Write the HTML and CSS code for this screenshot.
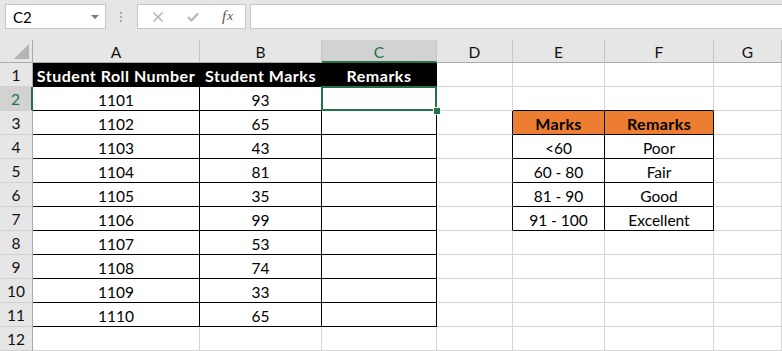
FILE: index.html
```html
<!DOCTYPE html>
<html>
<head>
    <title>Student Remarks</title>
    <meta charset="utf-8">
    <link rel="stylesheet" href="styles.css">
</head>
<body>
<div class="toolbar">
    <div class="namebox">
        <span>C2</span>
        <span class="caret"></span>
    </div>
    <div class="grip">
        <svg width="3" height="11" viewBox="0 0 3 11"><rect x="0" y="0" width="2" height="2" fill="#a9a9a9"/><rect x="0" y="4" width="2" height="2" fill="#a9a9a9"/><rect x="0" y="8" width="2" height="2" fill="#a9a9a9"/></svg>
    </div>
    <div class="fnbox">
        <span class="ico">
            <svg width="10" height="10" viewBox="0 0 10 10"><path d="M0.5 0.5 L9.5 9.5 M9.5 0.5 L0.5 9.5" stroke="#acacac" stroke-width="1.3" fill="none"/></svg>
        </span>
        <span class="ico">
            <svg width="12" height="10" viewBox="0 0 12 10"><path d="M1 5 L4.5 8.5 L11 1.5" stroke="#b4b4b4" stroke-width="2" fill="none"/></svg>
        </span>
        <span class="ico fx">f<i>x</i></span>
    </div>
    <div class="formula"></div>
</div>

<div class="sheet">
    <div class="corner"><span class="tri"></span></div>
    <div class="col">A</div>
    <div class="col">B</div>
    <div class="col sel">C</div>
    <div class="col">D</div>
    <div class="col">E</div>
    <div class="col">F</div>
    <div class="col">G</div>

    <div class="row">1</div>
    <div class="cell t dark">Student Roll Number</div>
    <div class="cell t dark">Student Marks</div>
    <div class="cell t dark">Remarks</div>
    <div class="cell"></div>
    <div class="cell"></div>
    <div class="cell"></div>
    <div class="cell"></div>

    <div class="row sel">2</div>
    <div class="cell t">1101</div>
    <div class="cell t">93</div>
    <div class="cell t active"></div>
    <div class="cell"></div>
    <div class="cell tb"></div>
    <div class="cell tb"></div>
    <div class="cell"></div>

    <div class="row">3</div>
    <div class="cell t">1102</div>
    <div class="cell t">65</div>
    <div class="cell t"></div>
    <div class="cell tr"></div>
    <div class="cell t orange">Marks</div>
    <div class="cell t orange">Remarks</div>
    <div class="cell"></div>

    <div class="row">4</div>
    <div class="cell t">1103</div>
    <div class="cell t">43</div>
    <div class="cell t"></div>
    <div class="cell tr"></div>
    <div class="cell t">&lt;60</div>
    <div class="cell t">Poor</div>
    <div class="cell"></div>

    <div class="row">5</div>
    <div class="cell t">1104</div>
    <div class="cell t">81</div>
    <div class="cell t"></div>
    <div class="cell tr"></div>
    <div class="cell t">60 - 80</div>
    <div class="cell t">Fair</div>
    <div class="cell"></div>

    <div class="row">6</div>
    <div class="cell t">1105</div>
    <div class="cell t">35</div>
    <div class="cell t"></div>
    <div class="cell tr"></div>
    <div class="cell t">81 - 90</div>
    <div class="cell t">Good</div>
    <div class="cell"></div>

    <div class="row">7</div>
    <div class="cell t">1106</div>
    <div class="cell t">99</div>
    <div class="cell t"></div>
    <div class="cell tr"></div>
    <div class="cell t">91 - 100</div>
    <div class="cell t">Excellent</div>
    <div class="cell"></div>

    <div class="row">8</div>
    <div class="cell t">1107</div>
    <div class="cell t">53</div>
    <div class="cell t"></div>
    <div class="cell"></div>
    <div class="cell"></div>
    <div class="cell"></div>
    <div class="cell"></div>

    <div class="row">9</div>
    <div class="cell t">1108</div>
    <div class="cell t">74</div>
    <div class="cell t"></div>
    <div class="cell"></div>
    <div class="cell"></div>
    <div class="cell"></div>
    <div class="cell"></div>

    <div class="row">10</div>
    <div class="cell t">1109</div>
    <div class="cell t">33</div>
    <div class="cell t"></div>
    <div class="cell"></div>
    <div class="cell"></div>
    <div class="cell"></div>
    <div class="cell"></div>

    <div class="row">11</div>
    <div class="cell t">1110</div>
    <div class="cell t">65</div>
    <div class="cell t"></div>
    <div class="cell"></div>
    <div class="cell"></div>
    <div class="cell"></div>
    <div class="cell"></div>

    <div class="row">12</div>
    <div class="cell"></div>
    <div class="cell"></div>
    <div class="cell"></div>
    <div class="cell"></div>
    <div class="cell"></div>
    <div class="cell"></div>
    <div class="cell"></div>
</div>
</body>
</html>
```

FILE: styles.css
```css
html,body{
    padding: 0;
    margin: 0;
}

body{
    width: 782px;
    height: 351px;
    overflow: hidden;
    background: #e6e6e6;
    font-family: Lato, "Liberation Sans", sans-serif;
    color: #000;
}

/* formula bar */
.toolbar{
    display: flex;
    align-items: flex-start;
    height: 40px;
    box-sizing: border-box;
    padding: 4px 0 0 5px;
}

.namebox{
    width: 101px;
    height: 25px;
    box-sizing: border-box;
    border: 1px solid #c6c6c6;
    background: #fff;
    display: flex;
    align-items: center;
    justify-content: space-between;
    padding: 0 6px 0 7px;
    font-size: 15px;
}

.caret{
    width: 0;
    height: 0;
    border-left: 4px solid transparent;
    border-right: 4px solid transparent;
    border-top: 4px solid #7a7a7a;
}

.grip{
    width: 31px;
    display: flex;
    justify-content: center;
    padding-top: 8px;
}

.fnbox{
    width: 109px;
    height: 25px;
    box-sizing: border-box;
    border: 1px solid #c6c6c6;
    background: #fff;
    display: flex;
    align-items: center;
    padding-left: 2px;
}

.ico{
    width: 35px;
    display: flex;
    justify-content: center;
}

.fx{
    font-family: "Liberation Serif", serif;
    font-style: italic;
    font-size: 15px;
    color: #555;
}

.fx i{
    font-size: 13px;
    margin-left: 1px;
}

.formula{
    flex: 1;
    height: 25px;
    margin-left: 4px;
    box-sizing: border-box;
    border: 1px solid #c6c6c6;
    border-right: none;
    background: #fff;
}

/* grid */
.sheet{
    display: grid;
    grid-template-columns: 33px 167px 122px 115px 76px 92px 109px 68px;
    grid-template-rows: 23px;
    grid-auto-rows: 24px;
}

.sheet > div{
    box-sizing: border-box;
    font-size: 15.5px;
    text-align: center;
}

.corner{
    border-right: 1px solid #ababab;
    border-bottom: 1px solid #ababab;
    display: flex;
    align-items: flex-end;
    justify-content: flex-end;
    padding: 0 3px 3px 0;
}

.tri{
    width: 0;
    height: 0;
    border-left: 15px solid transparent;
    border-bottom: 15px solid #b4b4b4;
}

.col{
    border-right: 1px solid #c4c4c4;
    border-bottom: 1px solid #ababab;
    line-height: 24px;
    color: #111;
}

.col.sel{
    background: #d2d2d2;
    color: #217346;
    border-bottom: 2px solid #217346;
}

.row{
    border-right: 1px solid #ababab;
    border-bottom: 1px solid #d0d0d0;
    line-height: 25px;
    color: #111;
}

.row.sel{
    background: #d2d2d2;
    color: #217346;
    border-right: 2px solid #217346;
}

.cell{
    background: #fff;
    border-right: 1px solid #d4d4d4;
    border-bottom: 1px solid #d4d4d4;
    line-height: 26px;
    white-space: nowrap;
}

.cell.t{
    border-right-color: #000;
    border-bottom-color: #000;
}

.cell.tr{
    border-right-color: #000;
}

.cell.tb{
    border-bottom-color: #000;
}

.sheet > .cell.dark{
    background: #000;
    color: #fff;
    font-weight: bold;
    font-size: 16px;
    letter-spacing: 0.5px;
}

.sheet > .cell.orange{
    background: #ed7d31;
    font-weight: bold;
    font-size: 16px;
    letter-spacing: 0.4px;
}

.cell.active{
    position: relative;
}

.cell.active::before{
    content: "";
    position: absolute;
    top: -1px;
    left: -1px;
    right: -1px;
    bottom: -1px;
    border: 2px solid #217346;
    z-index: 2;
}

.cell.active::after{
    content: "";
    position: absolute;
    right: -5px;
    bottom: -5px;
    width: 6px;
    height: 6px;
    background: #217346;
    border: 1px solid #fff;
    z-index: 3;
}
```
